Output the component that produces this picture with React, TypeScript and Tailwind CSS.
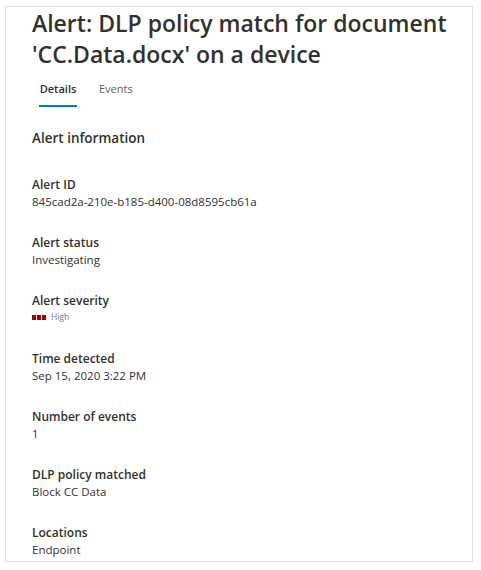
const FIELDS = [
  { label: "Alert ID", value: "845cad2a-210e-b185-d400-08d8595cb61a" },
  { label: "Alert status", value: "Investigating" },
  { label: "Alert severity", value: "severity" },
  { label: "Time detected", value: "Sep 15, 2020 3:22 PM" },
  { label: "Number of events", value: "1" },
  { label: "DLP policy matched", value: "Block CC Data" },
  { label: "Locations", value: "Endpoint" },
];

function Severity() {
  return (
    <div className="flex items-center h-[17px]">
      <span className="w-[4px] h-[5px] bg-[#a80000]" />
      <span className="w-[4px] h-[5px] bg-[#a80000] ml-[1px]" />
      <span className="w-[4px] h-[5px] bg-[#a80000] ml-[1px]" />
      <span className="ml-[5px] text-[8.5px] text-[#797775]">High</span>
    </div>
  );
}

export default function App() {
  return (
    <div
      className="w-[481px] h-[570px] bg-white pt-[6px] pl-[5px]"
      style={{ fontFamily: '"Open Sans", "Noto Sans", sans-serif' }}
    >
      <div className="w-[468px] h-[556px] border border-[#e1dfdd] pl-[26px] text-[#323130]">
        {/* Title */}
        <h1 className="text-[23px] leading-[31px] font-semibold pt-[1px] pr-[10px]">
          Alert: DLP policy match for document 'CC.Data.docx' on a device
        </h1>

        {/* Tabs */}
        <div className="flex gap-[22px] mt-[11px] pl-[7px]">
          <div className="flex flex-col items-center w-[38px]">
            <span className="text-[11px] leading-[16px] font-semibold">Details</span>
            <span className="mt-[8px] w-[38px] h-[2px] bg-[#0078d4]" />
          </div>
          <span className="text-[11px] leading-[16px] text-[#605e5c]">Events</span>
        </div>

        <h2 className="mt-[21px] text-[13.5px] leading-[20px] font-semibold">
          Alert information
        </h2>

        <div className="mt-[28px] flex flex-col gap-[24px]">
          {FIELDS.map((f) => (
            <div key={f.label} className="flex flex-col">
              <span className="text-[12px] leading-[17px] font-semibold">{f.label}</span>
              {f.value === "severity" ? (
                <Severity />
              ) : (
                <span className="text-[11.5px] leading-[17px]">{f.value}</span>
              )}
            </div>
          ))}
        </div>
      </div>
    </div>
  );
}
